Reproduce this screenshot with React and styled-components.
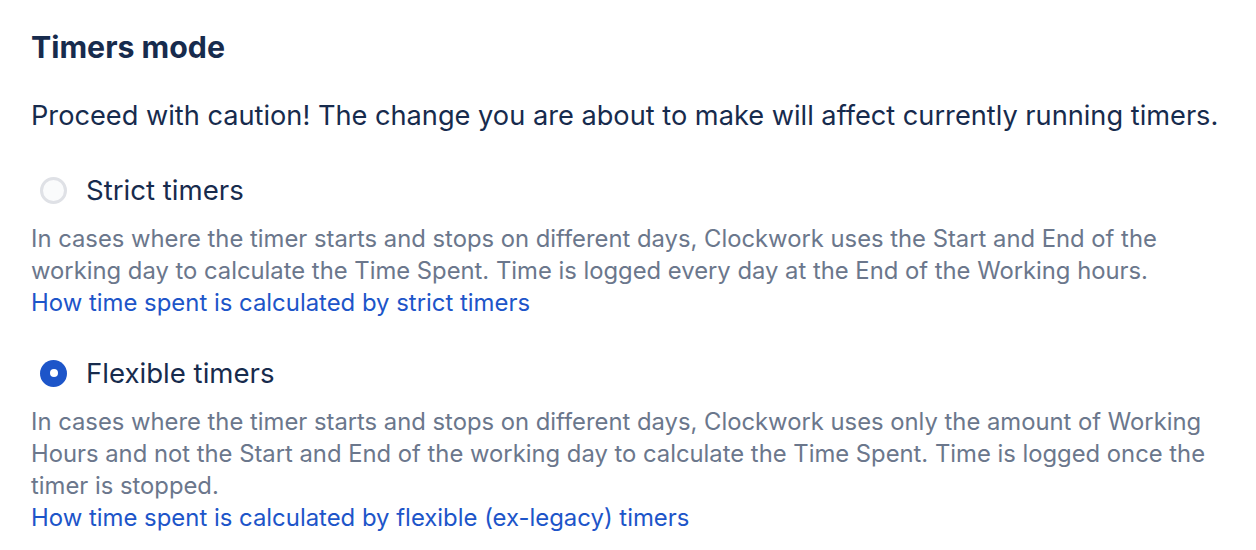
import React from "react";
import styled, { createGlobalStyle } from "styled-components";

const Global = createGlobalStyle`
  html, body { margin: 0; padding: 0; background: #ffffff; }
  body { font-family: Inter, "Noto Sans", sans-serif; -webkit-font-smoothing: antialiased; }
`;

const Page = styled.div`
  padding: 31px 31px 0 31px;
  color: #172b4d;
`;

const Heading = styled.h2`
  margin: 0 0 37px 0;
  font-size: 30.3px;
  line-height: 32px;
  font-weight: 700;
  color: #172b4d;
`;

const Warning = styled.p`
  margin: 0 0 42px 0;
  font-size: 27.2px;
  line-height: 32px;
  color: #172b4d;
  white-space: nowrap;
`;

const Option = styled.div`
  display: flex;
  flex-direction: column;
  margin-bottom: ${(p) => (p.$last ? "0" : "38px")};
`;

const RadioRow = styled.label`
  display: flex;
  align-items: center;
  gap: 19px;
  padding-left: 9px;
  height: 32px;
  margin-bottom: 17px;
  cursor: pointer;
`;

const RadioCircle = styled.span`
  box-sizing: border-box;
  width: 27px;
  height: 27px;
  border-radius: 50%;
  flex-shrink: 0;
  display: flex;
  align-items: center;
  justify-content: center;
  background: ${(p) => (p.$checked ? "#1d55c9" : "#fafbfc")};
  border: ${(p) => (p.$checked ? "none" : "3px solid #dfe1e6")};
  &::after {
    content: "";
    display: ${(p) => (p.$checked ? "block" : "none")};
    width: 8px;
    height: 8px;
    border-radius: 50%;
    background: #ffffff;
  }
`;

const Label = styled.span`
  font-size: 27.6px;
  line-height: 32px;
  color: #172b4d;
`;

const Description = styled.p`
  margin: 0;
  font-size: 23.8px;
  line-height: 32px;
  color: #6b778c;
  white-space: nowrap;
`;

const Link = styled.a`
  font-size: 23.9px;
  line-height: 32px;
  color: #1d55c9;
  text-decoration: none;
`;

export default function App() {
  return (
    <>
      <Global />
      <Page>
        <Heading>Timers mode</Heading>
        <Warning>
          Proceed with caution! The change you are about to make will affect currently running timers.
        </Warning>
        <Option>
          <RadioRow>
            <RadioCircle $checked={false} />
            <Label>Strict timers</Label>
          </RadioRow>
          <Description>
            In cases where the timer starts and stops on different days, Clockwork uses the Start and End of the
            <br />
            working day to calculate the Time Spent. Time is logged every day at the End of the Working hours.
          </Description>
          <Link href="#">How time spent is calculated by strict timers</Link>
        </Option>
        <Option $last>
          <RadioRow>
            <RadioCircle $checked />
            <Label>Flexible timers</Label>
          </RadioRow>
          <Description>
            In cases where the timer starts and stops on different days, Clockwork uses only the amount of Working
            <br />
            Hours and not the Start and End of the working day to calculate the Time Spent. Time is logged once the
            <br />
            timer is stopped.
          </Description>
          <Link href="#">How time spent is calculated by flexible (ex-legacy) timers</Link>
        </Option>
      </Page>
    </>
  );
}
